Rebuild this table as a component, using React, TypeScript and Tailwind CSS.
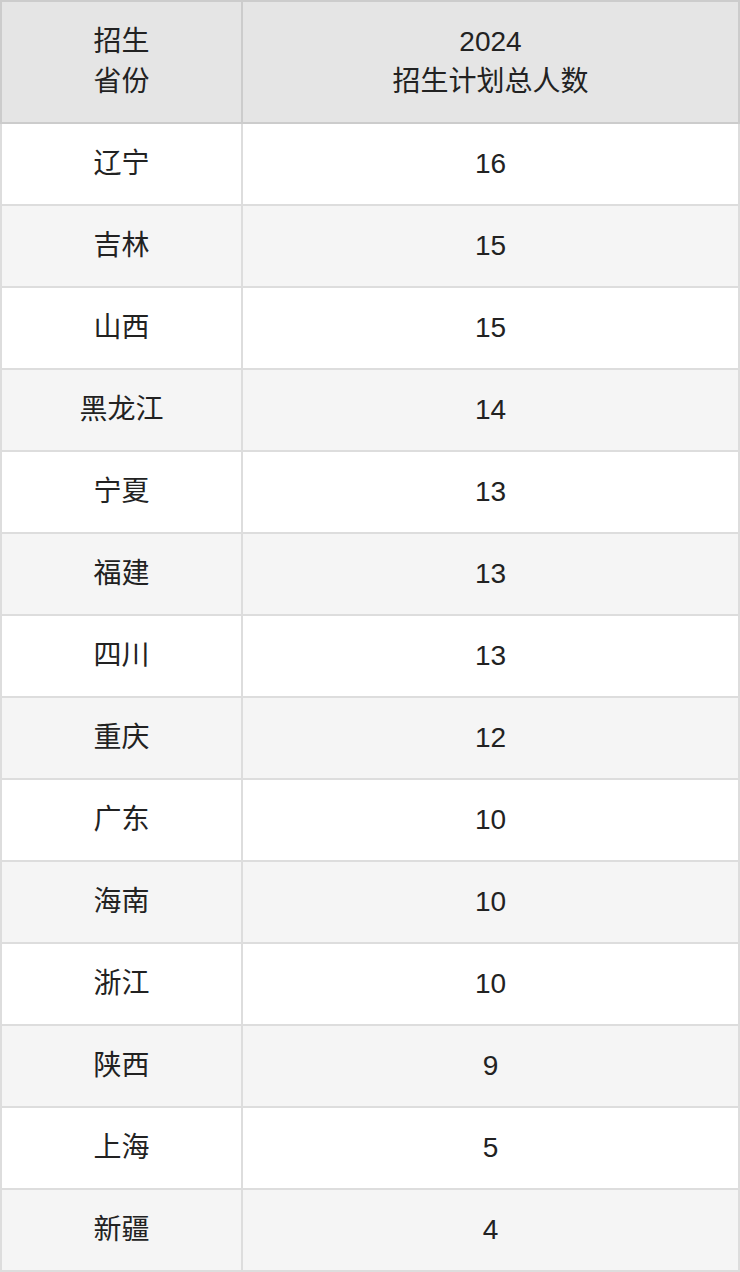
const rows: [string, string][] = [
  ['辽宁', '16'],
  ['吉林', '15'],
  ['山西', '15'],
  ['黑龙江', '14'],
  ['宁夏', '13'],
  ['福建', '13'],
  ['四川', '13'],
  ['重庆', '12'],
  ['广东', '10'],
  ['海南', '10'],
  ['浙江', '10'],
  ['陕西', '9'],
  ['上海', '5'],
  ['新疆', '4'],
];

export default function App() {
  return (
    <div
      className="w-[740px] bg-white text-[#222222] text-[28px] leading-[40px]"
      style={{ fontFamily: '"Liberation Sans", "Noto Sans CJK SC", sans-serif' }}
    >
      <div className="flex h-[124px] border-2 border-[#cccccc] bg-[#e5e5e5]">
        <div className="w-[241px] shrink-0 border-r-2 border-[#cccccc] flex flex-col items-center justify-center text-center">
          <div>招生</div>
          <div>省份</div>
        </div>
        <div className="flex-1 flex flex-col items-center justify-center text-center">
          <div>2024</div>
          <div>招生计划总人数</div>
        </div>
      </div>
      {rows.map(([prov, num], i) => (
        <div
          key={prov}
          className={
            i % 2 === 0
              ? 'flex h-[82px] border-x-2 border-b-2 border-[#dddddd] bg-white'
              : 'flex h-[82px] border-x-2 border-b-2 border-[#dddddd] bg-[#f5f5f5]'
          }
        >
          <div className="w-[241px] shrink-0 border-r-2 border-[#dddddd] flex items-center justify-center">
            {prov}
          </div>
          <div className="flex-1 flex items-center justify-center">{num}</div>
        </div>
      ))}
    </div>
  );
}
